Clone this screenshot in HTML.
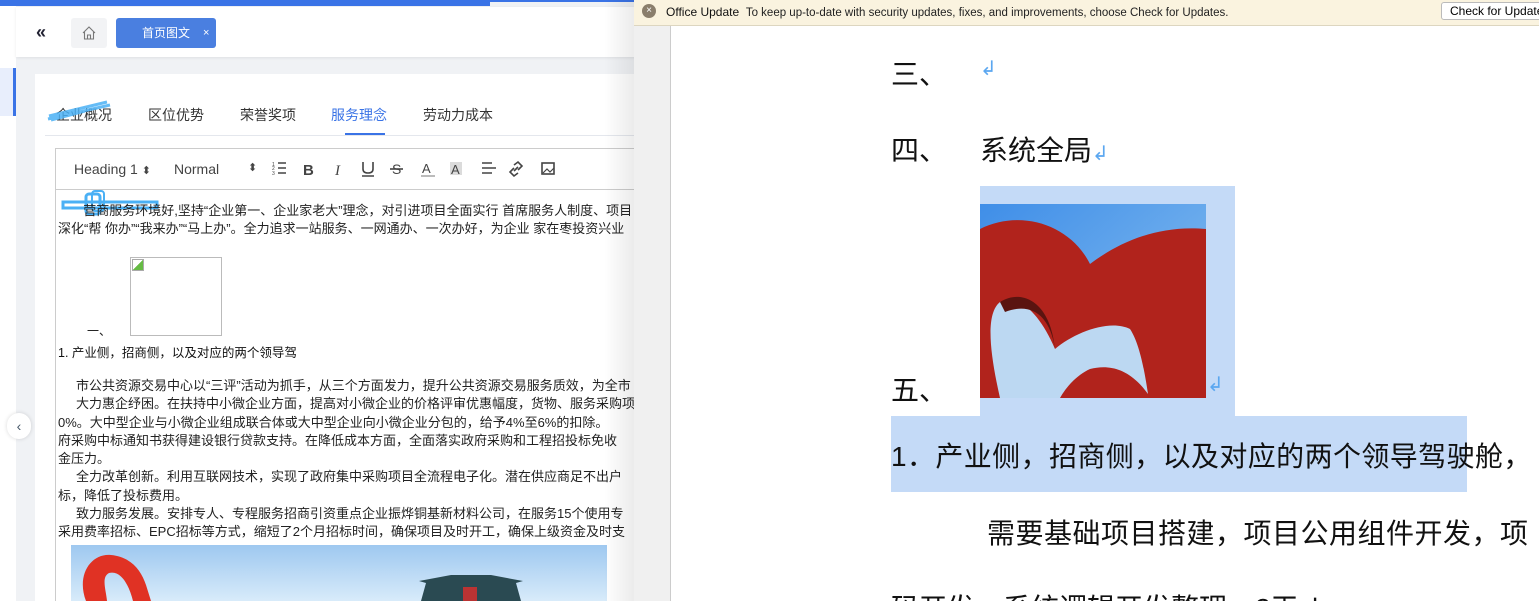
<!DOCTYPE html>
<html style="overflow:hidden;width:1539px;height:601px"><head><meta charset="utf-8"><style>
*{margin:0;padding:0;box-sizing:border-box}
body{width:1539px;height:601px;overflow:hidden;position:relative;background:#f0f2f5;font-family:"Liberation Sans","Noto Sans CJK SC",sans-serif;}
#w{position:absolute;left:0;top:0;width:1539px;height:601px;overflow:hidden}
.abs{position:absolute}
.cn{font-family:"Liberation Sans","Noto Sans CJK SC",sans-serif}
</style></head><body><div id="w">
<div class="abs" style="left:0;top:0;width:490px;height:6px;background:#3a73e6"></div>
<div class="abs" style="left:490px;top:0;width:150px;height:2px;background:#3a73e6"></div>
<div class="abs" style="left:0;top:6px;width:16px;height:595px;background:#fff"></div>
<div class="abs" style="left:0;top:68px;width:13px;height:48px;background:#e8eefc"></div>
<div class="abs" style="left:13px;top:68px;width:3px;height:48px;background:#3a73e6"></div>
<div class="abs" style="left:16px;top:7px;width:620px;height:50px;background:#fff;box-shadow:0 1px 3px rgba(0,0,0,.08)"></div>
<div class="abs" style="left:36px;top:22px;font-size:18px;color:#223;font-weight:bold;letter-spacing:-3px">«</div>
<div class="abs" style="left:71px;top:18px;width:36px;height:30px;background:#f2f3f5;border-radius:3px">
<svg width="36" height="30"><path d="M12 15 L18 9 L24 15 M13.5 14 V21 H22.5 V14 M16.5 21 V17 H19.5 V21" fill="none" stroke="#777" stroke-width="1.1"/></svg></div>
<div class="abs" style="left:116px;top:18px;width:100px;height:30px;background:#4a7fe0;border-radius:3px;color:#fff;font-size:12px;line-height:30px"><span style="margin-left:26px">首页图文</span><span style="position:absolute;left:87px;font-size:11px">×</span></div>
<div class="abs" style="left:35px;top:74px;width:600px;height:527px;background:#fff"></div>
<div class="abs cn" style="left:56px;top:105px;font-size:14px;color:#333">企业概况</div>
<svg class="abs" style="left:45px;top:98px" width="70" height="26"><path d="M4 18 L62 4 M3 21 L65 7 M6 22 L40 13" stroke="#4ab0f5" stroke-width="3" fill="none" opacity=".85"/></svg>
<div class="abs cn" style="left:148px;top:105px;font-size:14px;color:#333">区位优势</div>
<div class="abs cn" style="left:240px;top:105px;font-size:14px;color:#333">荣誉奖项</div>
<div class="abs cn" style="left:331px;top:105px;font-size:14px;color:#3a73e6">服务理念</div>
<div class="abs cn" style="left:423px;top:105px;font-size:14px;color:#333">劳动力成本</div>
<div class="abs" style="left:45px;top:135px;width:590px;height:1px;background:#e4e7ed"></div>
<div class="abs" style="left:345px;top:133px;width:40px;height:2px;background:#3a73e6"></div>
<div class="abs" style="left:55px;top:148px;width:590px;height:460px;border:1px solid #ccc"></div>
<div class="abs" style="left:55px;top:189px;width:590px;height:1px;background:#ccc"></div>
<div class="abs" style="left:74px;top:161px;font-size:14px;color:#444">Heading 1 <span style="font-size:11px">⬍</span></div>
<div class="abs" style="left:174px;top:161px;font-size:14px;color:#444">Normal</div>
<div class="abs" style="left:248px;top:161px;font-size:11px;color:#444">⬍</div>
<svg class="abs" style="left:270px;top:159px" width="300" height="20" fill="none" stroke="#444" stroke-width="1.6">
<path d="M8 4H16M8 9H16M8 14H16" /><text x="2" y="7" font-size="5" fill="#444" stroke="none">1</text><text x="2" y="11" font-size="5" fill="#444" stroke="none">2</text><text x="2" y="16" font-size="5" fill="#444" stroke="none">3</text>
<text x="33" y="16" font-size="15" font-weight="bold" fill="#444" stroke="none" font-family="Liberation Sans">B</text>
<text x="65" y="16" font-size="15" font-style="italic" fill="#444" stroke="none" font-family="Liberation Serif">I</text>
<path d="M93 3V10Q93 14 98 14Q103 14 103 10V3M92 17H104"/>
<text x="122" y="15" font-size="14" fill="#444" stroke="none">S</text><path d="M120 10H133"/>
<text x="152" y="14" font-size="13" fill="#444" stroke="none">A</text><path d="M151 17H165" stroke="#aaa"/>
<rect x="180" y="3" width="12" height="13" stroke="none" fill="#ccc" opacity=".7"/><text x="181" y="15" font-size="13" fill="#444" stroke="none">A</text>
<path d="M212 4H222M212 9H226M212 14H222"/>
<path d="M244 6l4 -3 4 4 -4 4M248 14l-4 3 -4 -4 4 -4M244 12l4 -4"/>
<rect x="272" y="4" width="12" height="11"/><path d="M273 14l4-4 3 3 4-4" stroke-width="1.2"/>
</svg>
<svg class="abs" style="left:60px;top:190px" width="100" height="30"><rect x="3" y="12" width="94" height="6" fill="none" stroke="#4ab0f5" stroke-width="3"/><rect x="26" y="4" width="14" height="20" rx="3" fill="none" stroke="#4ab0f5" stroke-width="3"/><rect x="32" y="1" width="12" height="20" rx="3" fill="none" stroke="#4ab0f5" stroke-width="2"/></svg>
<div class="abs cn" style="left:58px;top:202px;width:576px;font-size:13px;color:#222;line-height:18px;white-space:nowrap;overflow:hidden">
<div>&nbsp;&nbsp;&nbsp;&nbsp;&nbsp;&nbsp;&nbsp;营商服务环境好,坚持“企业第一、企业家老大”理念，对引进项目全面实行 首席服务人制度、项目</div>
<div>深化“帮 你办”“我来办”“马上办”。全力追求一站服务、一网通办、一次办好，为企业 家在枣投资兴业</div>
</div>
<div class="abs" style="left:130px;top:257px;width:92px;height:79px;border:1px solid #bbb"></div>
<div class="abs" style="left:132px;top:259px;width:12px;height:12px;border:1px solid #aaa;background:linear-gradient(135deg,#fff 50%,#6b4 50%)"></div>
<div class="abs cn" style="left:87px;top:322px;font-size:12px;color:#222">一、</div>
<div class="abs cn" style="left:58px;top:342px;font-size:12.5px;color:#111">1.&nbsp;产业侧，招商侧，以及对应的两个领导驾</div>
<div class="abs cn" style="left:58px;top:377px;width:576px;font-size:13px;color:#222;line-height:18.3px;white-space:nowrap;overflow:hidden">
<div>&nbsp;&nbsp;&nbsp;&nbsp;&nbsp;市公共资源交易中心以“三评”活动为抓手，从三个方面发力，提升公共资源交易服务质效，为全市</div>
<div>&nbsp;&nbsp;&nbsp;&nbsp;&nbsp;大力惠企纾困。在扶持中小微企业方面，提高对小微企业的价格评审优惠幅度，货物、服务采购项</div>
<div>0%。大中型企业与小微企业组成联合体或大中型企业向小微企业分包的，给予4%至6%的扣除。</div>
<div>府采购中标通知书获得建设银行贷款支持。在降低成本方面，全面落实政府采购和工程招投标免收</div>
<div>金压力。</div>
<div>&nbsp;&nbsp;&nbsp;&nbsp;&nbsp;全力改革创新。利用互联网技术，实现了政府集中采购项目全流程电子化。潜在供应商足不出户</div>
<div>标，降低了投标费用。</div>
<div>&nbsp;&nbsp;&nbsp;&nbsp;&nbsp;致力服务发展。安排专人、专程服务招商引资重点企业振烨铜基新材料公司，在服务15个使用专</div>
<div>采用费率招标、EPC招标等方式，缩短了2个月招标时间，确保项目及时开工，确保上级资金及时支</div>
</div>
<svg class="abs" style="left:71px;top:545px" width="536" height="56">
<defs><linearGradient id="sk" x1="0" y1="0" x2="0" y2="1"><stop offset="0" stop-color="#9ec8f0"/><stop offset="1" stop-color="#d8ebfa"/></linearGradient></defs>
<rect width="536" height="56" fill="url(#sk)"/>
<path d="M15 56 C5 30 20 8 40 10 C60 12 70 25 75 40 L80 56 H62 C58 40 50 25 38 28 C30 32 35 45 36 56 Z" fill="#e03224"/>
<path d="M350 56 L355 38 L348 36 L380 30 L420 30 L452 36 L445 38 L450 56 Z" fill="#2a4a52"/>
<rect x="392" y="42" width="14" height="14" fill="#b33"/>
</svg>
<div class="abs" style="left:7px;top:413px;width:24px;height:26px;border-radius:13px;background:#fff;box-shadow:0 0 4px rgba(0,0,0,.15);color:#456;font-size:14px;line-height:26px;text-align:center">‹</div>
<div class="abs" style="left:604px;top:0;width:30px;height:601px;background:linear-gradient(90deg,rgba(0,0,0,0),rgba(0,0,0,.08))"></div>
<div class="abs" style="left:634px;top:26px;width:37px;height:575px;background:#f0f0f0;border-right:1px solid #ccc"></div>
<div class="abs" style="left:671px;top:26px;width:868px;height:575px;background:#fff"></div>
<div class="abs" style="left:634px;top:0;width:905px;height:26px;background:#faf3df;border-bottom:1px solid #ddd6c0"></div>
<div class="abs" style="left:642px;top:4px;width:14px;height:14px;border-radius:7px;background:#8a7e6c;color:#fff;font-size:10px;line-height:14px;text-align:center">×</div>
<div class="abs" style="left:666px;top:5px;font-size:12px;color:#222;white-space:nowrap"><span style="color:#111">Office Update</span>&nbsp;&nbsp;<span style="font-size:11.5px">To keep up-to-date with security updates, fixes, and improvements, choose Check for Updates.</span></div>
<div class="abs" style="left:1441px;top:2px;width:110px;height:18px;border:1px solid #bbb;border-radius:3px;background:#fff;font-size:12px;line-height:16px;padding-left:8px;white-space:nowrap">Check for Updates</div>
<div class="abs cn" style="left:891px;top:53px;font-size:28px;color:#111">三、</div>
<div class="abs" style="left:980px;top:56px;font-size:20px;color:#5ba7f0">↲</div>
<div class="abs cn" style="left:891px;top:129px;font-size:28px;color:#111">四、</div>
<div class="abs cn" style="left:980px;top:129px;font-size:28px;color:#111">系统全局<span style="color:#5ba7f0;font-size:20px">↲</span></div>
<div class="abs" style="left:980px;top:186px;width:255px;height:230px;background:#c4daf7"></div>
<div class="abs" style="left:891px;top:416px;width:576px;height:76px;background:#c4daf7"></div>
<svg class="abs" style="left:980px;top:204px" width="226" height="194">
<defs><linearGradient id="s2" x1="0" y1="0" x2="1" y2="1"><stop offset="0" stop-color="#3f8ee8"/><stop offset="1" stop-color="#8ec3f0"/></linearGradient></defs>
<rect width="226" height="194" fill="url(#s2)"/>
<path d="M0 25 C40 5 90 20 110 60 C130 45 170 20 226 25 V194 H0 Z" fill="#b1231c"/>
<path d="M20 194 C10 150 5 110 20 98 C40 90 60 110 75 145 C95 128 130 115 150 125 C160 140 165 170 168 190 C150 165 130 160 110 165 C95 172 85 185 80 194 Z" fill="#bcd8f2"/>
<path d="M20 98 C40 85 70 95 75 145 C70 110 50 98 25 108 Z" fill="#5a1410"/>
</svg>
<div class="abs cn" style="left:891px;top:369px;font-size:28px;color:#111">五、</div>
<div class="abs" style="left:1207px;top:372px;font-size:20px;color:#5ba7f0">↲</div>
<div class="abs cn" style="left:891px;top:435px;font-size:28px;color:#111;white-space:nowrap;letter-spacing:0.4px">1．产业侧，招商侧，以及对应的两个领导驾驶舱，</div>
<div class="abs cn" style="left:987px;top:512px;font-size:28px;color:#111;white-space:nowrap;letter-spacing:0.5px">需要基础项目搭建，项目公用组件开发，项</div>
<div class="abs cn" style="left:891px;top:587px;font-size:28px;color:#111;white-space:nowrap">码开发，系统逻辑开发整理，2天↲</div>
</div></body></html>
